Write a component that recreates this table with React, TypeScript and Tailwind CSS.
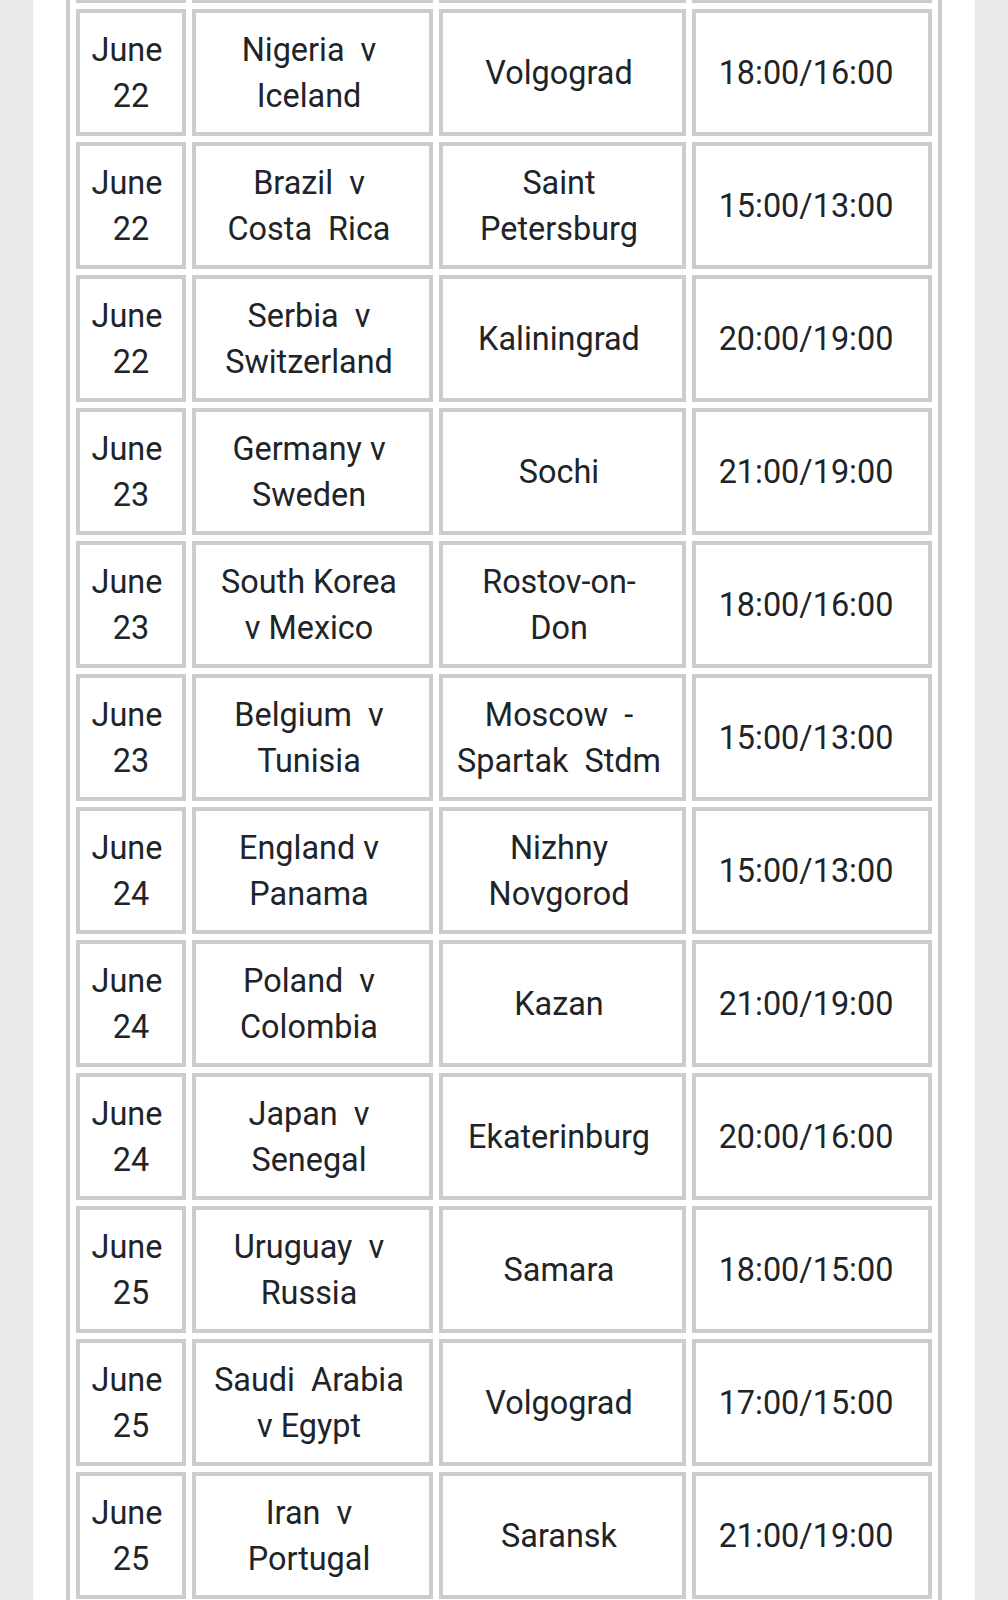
type Match = {
  date: string[];
  teams: string[];
  venue: string[];
  time: string;
};

const matches: Match[] = [
  { date: ['June\u00a0', '22'], teams: ['Nigeria  v', 'Iceland'], venue: ['Volgograd'], time: '18:00/16:00' },
  { date: ['June\u00a0', '22'], teams: ['Brazil  v', 'Costa  Rica'], venue: ['Saint', 'Petersburg'], time: '15:00/13:00' },
  { date: ['June\u00a0', '22'], teams: ['Serbia  v', 'Switzerland'], venue: ['Kaliningrad'], time: '20:00/19:00' },
  { date: ['June\u00a0', '23'], teams: ['Germany v', 'Sweden'], venue: ['Sochi'], time: '21:00/19:00' },
  { date: ['June\u00a0', '23'], teams: ['South Korea', 'v Mexico'], venue: ['Rostov-on-', 'Don'], time: '18:00/16:00' },
  { date: ['June\u00a0', '23'], teams: ['Belgium  v', 'Tunisia'], venue: ['Moscow  -', 'Spartak  Stdm'], time: '15:00/13:00' },
  { date: ['June\u00a0', '24'], teams: ['England v', 'Panama'], venue: ['Nizhny', 'Novgorod'], time: '15:00/13:00' },
  { date: ['June\u00a0', '24'], teams: ['Poland  v', 'Colombia'], venue: ['Kazan'], time: '21:00/19:00' },
  { date: ['June\u00a0', '24'], teams: ['Japan  v', 'Senegal'], venue: ['Ekaterinburg'], time: '20:00/16:00' },
  { date: ['June\u00a0', '25'], teams: ['Uruguay  v', 'Russia'], venue: ['Samara'], time: '18:00/15:00' },
  { date: ['June\u00a0', '25'], teams: ['Saudi  Arabia', 'v Egypt'], venue: ['Volgograd'], time: '17:00/15:00' },
  { date: ['June\u00a0', '25'], teams: ['Iran  v', 'Portugal'], venue: ['Saransk'], time: '21:00/19:00' },
];

function Cell({ lines, pad }: { lines: string[]; pad: string }) {
  return (
    <div
      className={`flex h-[127px] flex-col items-center justify-center border-4 border-[#cccccc] bg-white text-center ${pad}`}
    >
      {lines.map((line, i) => (
        <span key={i} className="block whitespace-pre">
          {line}
        </span>
      ))}
    </div>
  );
}

export default function App() {
  return (
    <div className="min-h-screen bg-[#e9e9e9] px-[33px]">
      <div className="min-h-screen overflow-hidden bg-white px-[33px]">
        <div className="-mt-[124px] grid grid-cols-[110px_241px_247px_240px] gap-[6px] border-x-4 border-[#cccccc] px-[6px] pb-[6px] font-['Roboto',sans-serif] text-[32.4px] leading-[46px] text-[#202428]">
          {/* row scrolled above the fold, only its bottom edge shows */}
          <Cell lines={[]} pad="px-3" />
          <Cell lines={[]} pad="px-3" />
          <Cell lines={[]} pad="px-3" />
          <Cell lines={[]} pad="px-3" />
          {matches.map((m, idx) => (
            <div key={idx} className="contents">
              <Cell lines={m.date} pad="px-2" />
              <Cell lines={m.teams} pad="pl-3 pr-[19px]" />
              <Cell lines={m.venue} pad="pl-3 pr-[19px]" />
              <Cell lines={[m.time]} pad="pl-3 pr-[24px]" />
            </div>
          ))}
        </div>
      </div>
    </div>
  );
}
